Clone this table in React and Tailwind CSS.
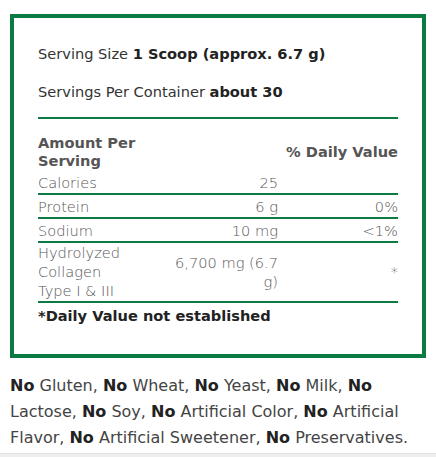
import React from "react";

const rows = [
  { name: "Calories", amount: "25", dv: "" },
  { name: "Protein", amount: "6 g", dv: "0%" },
  { name: "Sodium", amount: "10 mg", dv: "<1%" },
  { name: "Hydrolyzed Collagen Type I & III", amount: "6,700 mg (6.7 g)", dv: "*" },
];

const claims = [
  "Gluten",
  "Wheat",
  "Yeast",
  "Milk",
  "Lactose",
  "Soy",
  "Artificial Color",
  "Artificial Flavor",
  "Artificial Sweetener",
  "Preservatives",
];

export default function App() {
  return (
    <div
      className="bg-white w-[436px] h-[457px] overflow-hidden flex flex-col"
      style={{ fontFamily: '"DejaVu Sans", "Noto Sans", sans-serif' }}
    >
      <div className="px-[10px] pt-[14px]">
        {/* Facts panel */}
        <div className="border-4 border-[#0b7a43] px-6 pt-[26px] pb-[28px]">
          <p className="text-[14.6px] leading-5 text-[#333]">
            Serving Size <span className="font-bold text-[#222]">1 Scoop (approx. 6.7 g)</span>
          </p>
          <p className="text-[14.6px] leading-5 text-[#333] mt-[18px]">
            Servings Per Container <span className="font-bold text-[#222]">about 30</span>
          </p>
          <div className="h-[2px] bg-[#0b7a43] mt-[15px] mb-[15px]" />

          <div className="grid grid-cols-3 items-center text-[14.6px] leading-[18px] font-bold text-[#555]">
            <div className="pr-4">Amount Per Serving</div>
            <div />
            <div className="text-right">% Daily Value</div>
          </div>

          {rows.map((r, i) => (
            <div
              key={r.name}
              className={
                "grid grid-cols-3 items-center text-[14.6px] leading-[19px] font-light text-[#555] border-b-2 border-[#0b7a43] " +
                (i === 0 ? "pt-[3px] pb-[1px]" : i === 3 ? "pt-0 pb-[1px]" : "pt-[2px] pb-[1px]")
              }
            >
              <div className="pr-5">{r.name}</div>
              <div className="text-right">{r.amount}</div>
              <div className="text-right">{r.dv}</div>
            </div>
          ))}

          <p className="text-[14.6px] leading-5 font-bold text-[#222] mt-[3px]">
            *Daily Value not established
          </p>
        </div>
      </div>

      {/* Free-from list */}
      <p className="px-[10px] pt-[15px] text-[16px] leading-[26px] text-[#444]">
        {claims.map((c, i) => (
          <React.Fragment key={c}>
            <span className="font-bold text-[#222]">No</span> {c}
            {i < claims.length - 1 ? ", " : "."}
          </React.Fragment>
        ))}
      </p>
      <div className="mt-auto h-[4px] bg-[#eeeeee] border-t border-[#e2e2e2]" />
    </div>
  );
}
